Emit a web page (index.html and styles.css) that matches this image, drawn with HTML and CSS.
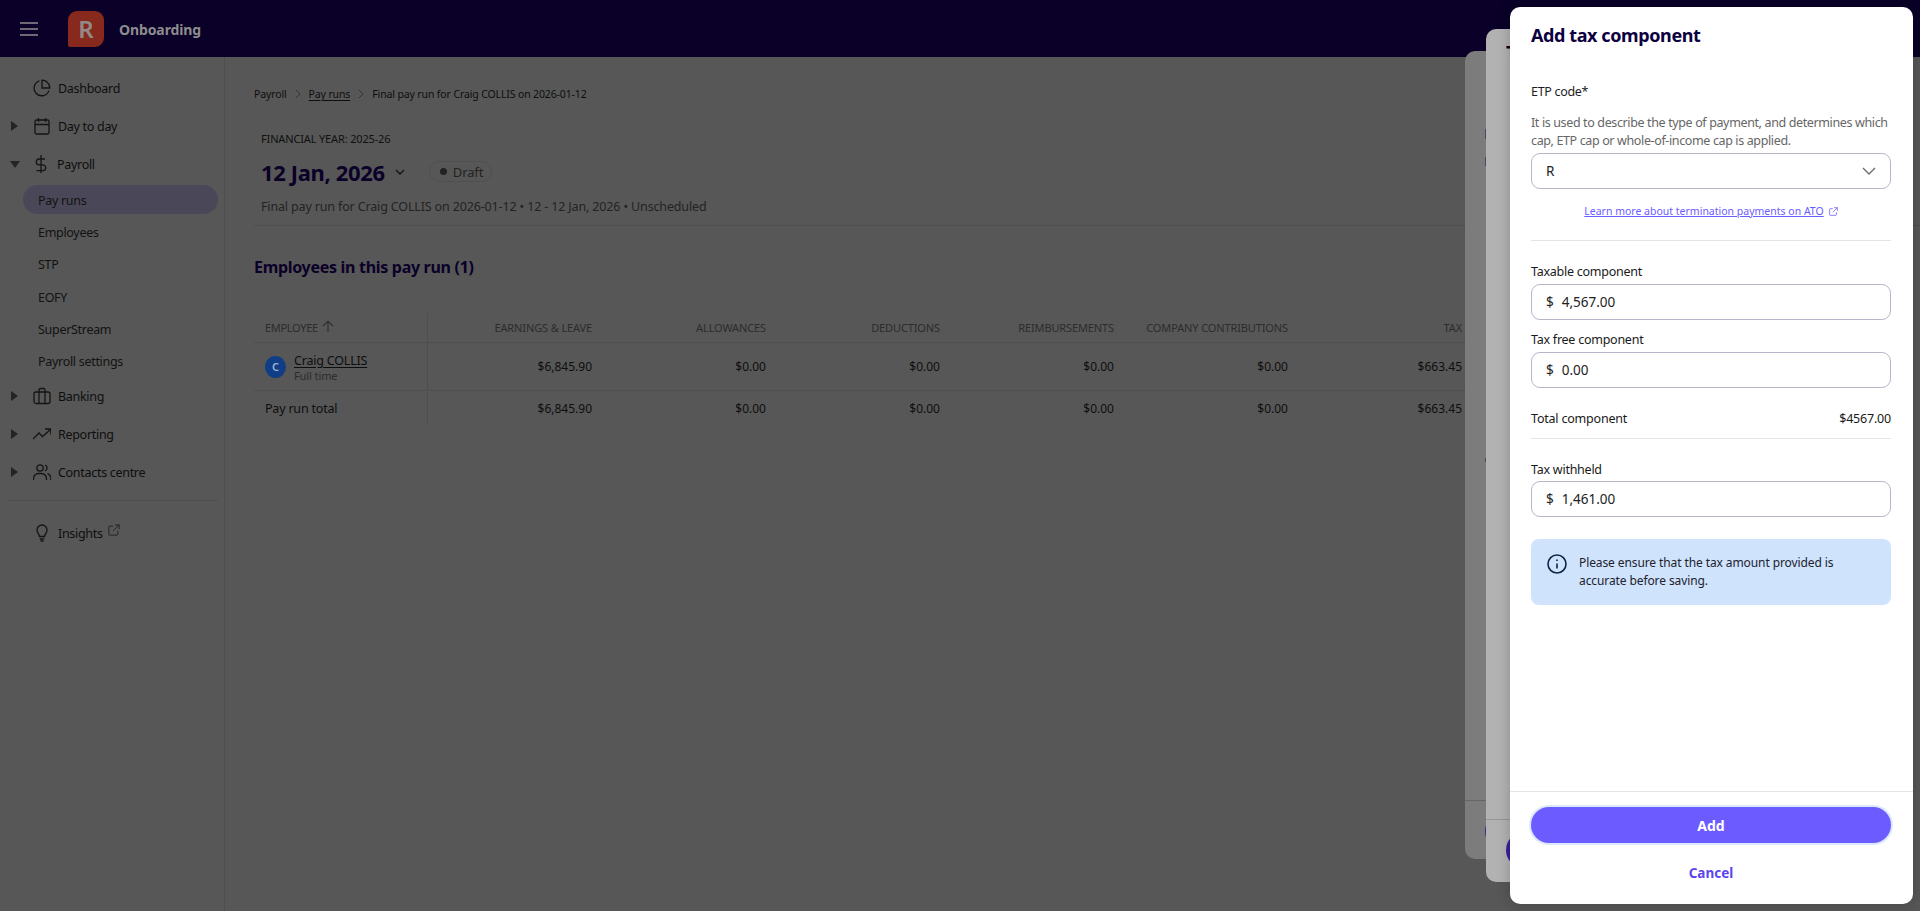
FILE: index.html
```html
<!DOCTYPE html>
<html lang="en">
<head>
<meta charset="utf-8">
<title>Add tax component</title>
<link rel="stylesheet" href="styles.css">
</head>
<body>
<header class="topbar">
  <svg class="burger" width="18" height="14" viewBox="0 0 18 14"><path d="M0 1h18M0 7h18M0 13h18" stroke="currentColor" stroke-width="1.4"/></svg>
  <div class="logo">R</div>
  <div class="org">Onboarding</div>
</header>
<div class="shell">
  <nav class="sidebar">
    <a class="nav"><i class="caret none"></i><svg class="ic" viewBox="0 0 18 18"><path d="M15.9 11.6A7.6 7.6 0 1 1 6.4 1.9"/><path d="M9 1.2a7.8 7.8 0 0 1 7.8 7.8H9z"/></svg>Dashboard</a>
    <a class="nav"><i class="caret"></i><svg class="ic" viewBox="0 0 18 18"><rect x="2" y="3" width="14" height="14" rx="1.5"/><path d="M2 7.5h14M5.5 1v4M12.5 1v4"/></svg>Day to day</a>
    <a class="nav"><i class="caret down"></i><svg class="ic" viewBox="0 0 18 18"><path d="M9 0v18M13 4H7.2a2.9 2.9 0 0 0 0 5.8h3.6a2.9 2.9 0 0 1 0 5.8H4.5"/></svg>Payroll</a>
    <a class="sub active">Pay runs</a>
    <a class="sub">Employees</a>
    <a class="sub">STP</a>
    <a class="sub">EOFY</a>
    <a class="sub">SuperStream</a>
    <a class="sub">Payroll settings</a>
    <a class="nav"><i class="caret"></i><svg class="ic" viewBox="0 0 18 18"><rect x="1" y="5" width="16" height="11.5" rx="2"/><path d="M6 16.500V3a1.500 1.500 0 0 1 1.500-1.500h3A1.500 1.500 0 0 1 12 3v13.500"/></svg>Banking</a>
    <a class="nav"><i class="caret"></i><svg class="ic" viewBox="0 0 18 18"><path d="M0 14l6-6 3.500 3.500L17.500 4.500M12 4h5.800v5.500"/></svg>Reporting</a>
    <a class="nav"><i class="caret"></i><svg class="ic" viewBox="0 0 18 18"><circle cx="7" cy="5" r="3.200"/><path d="M0.500 17v-1.500a5 5 0 0 1 5-5h3a5 5 0 0 1 5 5V17M12 2a3.200 3.200 0 0 1 0 6M14.500 10.600a5 5 0 0 1 3.300 4.700V17"/></svg>Contacts centre</a>
    <div class="nav-rule"></div>
    <a class="nav"><i class="caret none"></i><svg class="ic" viewBox="0 0 18 18"><path d="M6.500 12.500c0-2-2.500-3-2.500-6.500a5 5 0 0 1 10 0c0 3.500-2.500 4.500-2.500 6.500zM6.800 15h4.400M7.500 17h3"/></svg>Insights<svg class="ext" viewBox="0 0 14 14"><path d="M6 2.500H2A1 1 0 0 0 1 3.500v8.500a1 1 0 0 0 1 1h8.500a1 1 0 0 0 1-1V8M8 1h5v5M13 1L6 8"/></svg></a>
  </nav>
  <main class="main">
    <div class="crumbs"><span>Payroll</span><svg class="crumb-sep" viewBox="0 0 6 10"><path d="M1 1l4 4-4 4"/></svg><u>Pay runs</u><svg class="crumb-sep" viewBox="0 0 6 10"><path d="M1 1l4 4-4 4"/></svg><span>Final pay run for Craig COLLIS on 2026-01-12</span></div>
    <div class="head">
      <div class="fy">FINANCIAL YEAR: 2025-26</div>
      <div class="title-row">
        <h1>12 Jan, 2026</h1>
        <svg class="title-chev" viewBox="0 0 10 6"><path d="M1 1l4 4 4-4"/></svg>
        <span class="pill"><i></i>Draft</span>
      </div>
      <div class="subtitle">Final pay run for Craig COLLIS on 2026-01-12 • 12 - 12 Jan, 2026 • Unscheduled</div>
    </div>
    <h2>Employees in this pay run (1)</h2>
    <div class="table">
      <div class="row hdr">
        <div class="cell first">EMPLOYEE <svg class="sort" viewBox="0 0 10 10"><path d="M5 10V1M1 5l4-4 4 4"/></svg></div>
        <div class="cell">EARNINGS &amp; LEAVE</div><div class="cell">ALLOWANCES</div><div class="cell">DEDUCTIONS</div><div class="cell">REIMBURSEMENTS</div><div class="cell">COMPANY CONTRIBUTIONS</div><div class="cell">TAX</div>
      </div>
      <div class="row emp">
        <div class="cell first person"><span class="avatar">C</span><span class="who"><u>Craig COLLIS</u><small>Full time</small></span></div>
        <div class="cell">$6,845.90</div><div class="cell">$0.00</div><div class="cell">$0.00</div><div class="cell">$0.00</div><div class="cell">$0.00</div><div class="cell">$663.45</div>
      </div>
      <div class="row tot">
        <div class="cell first">Pay run total</div>
        <div class="cell">$6,845.90</div><div class="cell">$0.00</div><div class="cell">$0.00</div><div class="cell">$0.00</div><div class="cell">$0.00</div><div class="cell">$663.45</div>
      </div>
    </div>
  </main>
</div>

<aside class="sheet back-a"><span class="peek p1"></span><span class="peek p2"></span><span class="peek p3"></span><div class="back-foot"><span class="back-btn"></span></div></aside>
<aside class="sheet back-b"><div class="back-title">Tax</div><div class="back-foot"><span class="back-btn"></span></div></aside>

<aside class="sheet front">
  <h3>Add tax component</h3>
  <div class="body">
    <div class="etp-label">ETP code*</div>
    <p class="hint">It is used to describe the type of payment, and determines which cap, ETP cap or whole-of-income cap is applied.</p>
    <div class="field select">R<svg class="sel-chev" viewBox="0 0 14 8"><path d="M1 1l6 6 6-6"/></svg></div>
    <div class="learn"><u>Learn more about termination payments on ATO</u><svg viewBox="0 0 14 14"><path d="M6 2.500H2A1 1 0 0 0 1 3.500v8.500a1 1 0 0 0 1 1h8.500a1 1 0 0 0 1-1V8M8 1h5v5M13 1L6 8"/></svg></div>
    <hr class="rule first-rule">
    <label class="lbl">Taxable component</label>
    <div class="field"><span class="cur">$</span>4,567.00</div>
    <label class="lbl second">Tax free component</label>
    <div class="field"><span class="cur">$</span>0.00</div>
    <div class="total"><span>Total component</span><span>$4567.00</span></div>
    <hr class="rule">
    <label class="lbl third">Tax withheld</label>
    <div class="field"><span class="cur">$</span>1,461.00</div>
    <div class="alert">
      <svg viewBox="0 0 20 20"><circle cx="10" cy="10" r="9"/><path d="M10 9.500v5M10 5.500v1.500"/></svg>
      <p>Please ensure that the tax amount provided is accurate before saving.</p>
    </div>
  </div>
  <footer class="foot">
    <button class="add">Add</button>
    <button class="cancel">Cancel</button>
  </footer>
</aside>
</body>
</html>
```
FILE: styles.css
```css
* { box-sizing: border-box; }
html, body { margin: 0; height: 100%; overflow: hidden; }
body { background: #575757; color: #0e0e0e; font-family: "Noto Sans", sans-serif; font-size: 13px; }
svg { fill: none; stroke: currentColor; }
.topbar { height: 57px; background: #0a0028; display: flex; align-items: center; color: #8d8d8d; padding-left: 20px; }
.burger { display: block; margin-right: 30px; }
.logo { width: 36px; height: 36px; background: #87291c; border-radius: 9px 9px 9px 2px; display: flex; align-items: center; justify-content: center; font-size: 24px; font-weight: 600; margin-right: 15px; color: #938a88; }
.org { font-weight: 700; font-size: 14px; letter-spacing: -.1px; position: relative; top: 1px; }
.shell { display: flex; height: 854px; }
.sidebar { width: 225px; flex: none; border-right: 1px solid #4e4e4e; padding-top: 12px; }
.nav { height: 38px; display: flex; align-items: center; font-size: 12.5px; letter-spacing: -.3px; color: #0e0e0e; padding-left: 10px; }
.caret { width: 0; height: 0; border-left: 7px solid #242424; border-top: 5px solid transparent; border-bottom: 5px solid transparent; margin-right: 15px; margin-left: 1px; }
.caret.down { border-top: 7px solid #242424; border-left: 5px solid transparent; border-right: 5px solid transparent; border-bottom: 0; margin-left: 0; margin-right: 12px; }
.caret.none { border-color: transparent; }
.ic { width: 18px; height: 18px; color: #141414; stroke-width: 1.3; margin-right: 7px; flex: none; }
.ext { width: 12px; height: 12px; stroke-width: 1.1; color: #222; margin-left: 5px; position: relative; top: -3px; }
.sub { height: 32.33px; margin-left: 23px; width: 195px; display: flex; align-items: center; padding: 2px 0 0 15px; font-size: 12.5px; letter-spacing: -.3px; color: #121212; border-radius: 15px; }
.sub.active { background: #4a4858; height: 29px; margin-top: 1.5px; margin-bottom: 2px; }
.nav-rule { margin: 9px 6px 13px 8px; height: 1px; background: #4e4e4e; }
.main { flex: 1; min-width: 0; padding: 29px 0 0 29px; overflow: hidden; }
.crumbs { display: flex; align-items: center; font-size: 10.5px; letter-spacing: -.13px; height: 16px; color: #0e0e0e; }
.crumbs u { text-underline-offset: 2px; }
.crumb-sep { width: 6px; height: 10px; stroke-width: 1; color: #333; margin: 0 8px 0 8px; }
.head { margin-top: 28.5px; padding: 0 0 9px 7px; border-bottom: 1px solid #4e4e4e; }
.fy { font-size: 11px; letter-spacing: -.15px; line-height: 15px; color: #101010; }
.title-row { display: flex; align-items: center; margin-top: 10px; height: 32px; }
h1 { margin: 0; font-size: 22px; font-weight: 700; letter-spacing: -.35px; color: #0a0028; line-height: 32px; }
.title-chev { width: 10px; height: 6px; stroke-width: 1.3; color: #111; margin: 0 24px 0 10px; }
.pill { display: flex; align-items: center; height: 21px; width: 63px; border: 1px solid #505050; border-radius: 11px; padding-left: 10px; font-size: 13px; letter-spacing: -.1px; color: #222; }
.pill i { width: 7px; height: 7px; border-radius: 50%; background: #222; margin-right: 6px; }
.subtitle { margin-top: 10px; font-size: 12.5px; letter-spacing: -.15px; line-height: 18px; color: #232323; }
h2 { margin: 29px 0 0; font-size: 16px; font-weight: 700; letter-spacing: -.3px; color: #0a0028; line-height: 24px; }
.table { margin-top: 34px; width: 1218px; }
.row { display: grid; grid-template-columns: repeat(7, 174px); }
.row.hdr { height: 30px; border-bottom: 1px solid #4e4e4e; color: #2c2c2c; font-size: 11px; letter-spacing: -.12px; }
.row.emp { height: 48.5px; border-bottom: 1px solid #4e4e4e; font-size: 12px; }
.row.tot { height: 33px; font-size: 12px; padding-top: 1px; }
.person { padding-top: 3px; }
.cell { display: flex; align-items: center; justify-content: flex-end; padding-right: 10px; white-space: nowrap; }
.cell.first { justify-content: flex-start; padding-left: 11px; border-right: 1px solid #4e4e4e; font-size: 12.5px; letter-spacing: -.2px; }
.hdr .cell.first { font-size: 11px; letter-spacing: -.3px; }
.sort { width: 12px; height: 12px; stroke-width: .9; margin-left: 4px; position: relative; top: -1px; }
.avatar { width: 21px; height: 22px; border-radius: 50%; background: #0f3d86; color: #9fb3cd; display: flex; align-items: center; justify-content: center; font-size: 11px; font-weight: 600; margin-right: 8px; position: relative; top: -1px; }
.who { display: flex; flex-direction: column; line-height: 15px; }
.who u { font-size: 12.5px; letter-spacing: -.2px; text-underline-offset: 2px; }
.who small { font-size: 11px; letter-spacing: -.1px; color: #2c2c2c; }
.sheet { position: absolute; border-radius: 10px; overflow: hidden; }
.back-a { left: 1465px; top: 51px; width: 60px; height: 808px; background: #7c7c7c; }
.back-b { left: 1486px; top: 29px; width: 60px; height: 853px; background: #b2b2b2; }
.back-foot { position: absolute; left: 0; right: 0; bottom: 0; border-top: 1px solid #666; height: 59px; }
.back-b .back-foot { height: 63px; border-top-color: #959595; }
.back-btn { position: absolute; left: 20px; top: 12px; width: 60px; height: 36px; border-radius: 18px; background: #3a1f9c; }
.back-title { position: absolute; left: 20px; top: 10px; font-size: 20px; font-weight: 700; color: #0a0028; }
.peek { position: absolute; left: 20px; width: 1px; background: #4b4866; }
.p1 { top: 78px; height: 10px; }
.p2 { top: 106px; height: 9px; }
.p3 { top: 407px; height: 4px; }
.front { left: 1510px; top: 7px; width: 403px; height: 897px; background: #fff; display: flex; flex-direction: column; box-shadow: 0 0 14px rgba(0,0,0,.22); color: #1e1e1e; }
h3 { margin: 0; padding: 14px 21px 0; height: 62px; font-size: 18px; letter-spacing: -.4px; line-height: 28px; font-weight: 700; color: #0c0040; }
.body { flex: 1; padding: 0 22px 0 21px; }
.etp-label { font-size: 12.5px; letter-spacing: -.3px; line-height: 18px; margin-top: 14px; }
.hint { margin: 13px 0 3px; font-size: 12.5px; letter-spacing: -.37px; line-height: 18px; color: #666; }
.field { height: 36px; border: 1px solid #b9b6cb; border-radius: 9px; display: flex; align-items: center; padding-left: 14px; font-size: 13.5px; color: #222; position: relative; }
.cur { margin-right: 8px; }
.sel-chev { position: absolute; right: 14px; top: 13px; width: 14px; height: 8px; stroke-width: 1.4; color: #6d6d6d; }
.learn { display: flex; align-items: center; justify-content: center; margin-top: 13px; height: 18px; font-size: 10.5px; color: #6c5bff; }
.learn svg { width: 9px; height: 9px; margin-left: 5px; stroke-width: 1.2; }
.rule { border: 0; height: 1px; background: #e4e4e8; margin: 0; }
.first-rule { margin-top: 20px; }
.lbl { display: block; font-size: 12.5px; letter-spacing: -.25px; line-height: 18px; color: #1a1a1a; margin-top: 22px; margin-bottom: 3px; }
.lbl.second { margin-top: 11px; }
.lbl.third { margin-top: 22px; margin-bottom: 2px; }
.total { display: flex; justify-content: space-between; font-size: 12.5px; letter-spacing: -.2px; color: #1a1a1a; line-height: 18px; margin-top: 22px; margin-bottom: 10px; }
.alert { margin-top: 22px; height: 66px; background: #cfe3fd; border-radius: 8px; display: flex; padding: 15px 16px 0; }
.alert svg { width: 20px; height: 20px; flex: none; color: #0b2546; stroke-width: 1.6; margin-right: 12px; }
.alert p { margin: 0; font-size: 12px; letter-spacing: -.1px; line-height: 18px; color: #22222c; }
.foot { height: 113px; border-top: 1px solid #e4e4e8; padding: 15px 22px 0 21px; display: flex; flex-direction: column; align-items: center; }
.add { width: 100%; height: 36px; flex: none; border: 0; border-radius: 18px; background: #6c5bff; color: #fff; font: 700 14px "Noto Sans", sans-serif; box-shadow: 0 0 0 2px #dbe9fd; }
.cancel { margin-top: 18px; border: 0; background: none; color: #5b45f0; font: 700 13.5px "Noto Sans", sans-serif; padding: 0; line-height: 24px; }
```
